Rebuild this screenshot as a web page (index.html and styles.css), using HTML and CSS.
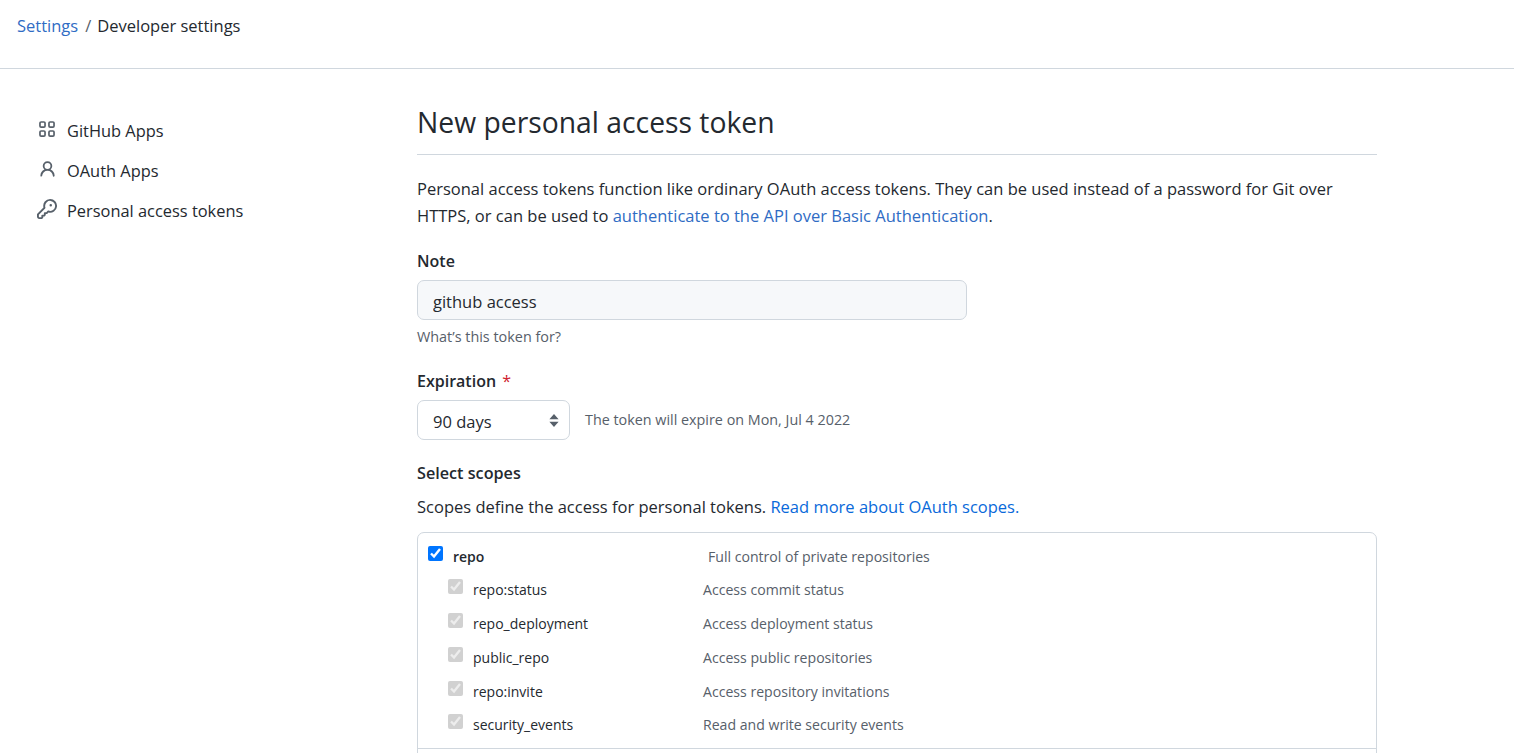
FILE: index.html
```html
<!DOCTYPE html>
<html lang="en">
<head>
<meta charset="utf-8">
<title>New personal access token</title>
<link rel="stylesheet" href="styles.css">
</head>
<body>
<header class="topbar">
  <nav class="crumbs"><a href="#" class="link">Settings</a><span class="sep">/</span><span>Developer settings</span></nav>
</header>
<div class="layout">
  <aside class="side">
    <a class="side-item" href="#">
      <svg class="icon" viewBox="0 0 16 16" width="16" height="16"><path fill-rule="evenodd" d="M1 2.75A1.75 1.75 0 0 1 2.75 1h2.5A1.75 1.75 0 0 1 7 2.75v2.5A1.75 1.75 0 0 1 5.25 7h-2.5A1.75 1.75 0 0 1 1 5.25v-2.5zm1.75-.25a.25.25 0 0 0-.25.25v2.5c0 .138.112.25.25.25h2.5a.25.25 0 0 0 .25-.25v-2.5a.25.25 0 0 0-.25-.25h-2.5zM9 2.75A1.75 1.75 0 0 1 10.75 1h2.5A1.75 1.75 0 0 1 15 2.75v2.5A1.75 1.75 0 0 1 13.25 7h-2.5A1.75 1.75 0 0 1 9 5.25v-2.5zm1.75-.25a.25.25 0 0 0-.25.25v2.5c0 .138.112.25.25.25h2.5a.25.25 0 0 0 .25-.25v-2.5a.25.25 0 0 0-.25-.25h-2.5zM1 10.75A1.75 1.75 0 0 1 2.75 9h2.5A1.75 1.75 0 0 1 7 10.75v2.5A1.75 1.75 0 0 1 5.25 15h-2.5A1.75 1.75 0 0 1 1 13.25v-2.5zm1.75-.25a.25.25 0 0 0-.25.25v2.5c0 .138.112.25.25.25h2.5a.25.25 0 0 0 .25-.25v-2.5a.25.25 0 0 0-.25-.25h-2.5zM9 10.75A1.75 1.75 0 0 1 10.75 9h2.5A1.75 1.75 0 0 1 15 10.75v2.5A1.75 1.75 0 0 1 13.25 15h-2.5A1.75 1.75 0 0 1 9 13.25v-2.5zm1.75-.25a.25.25 0 0 0-.25.25v2.5c0 .138.112.25.25.25h2.5a.25.25 0 0 0 .25-.25v-2.5a.25.25 0 0 0-.25-.25h-2.5z"/></svg>
      <span>GitHub Apps</span>
    </a>
    <a class="side-item" href="#">
      <svg class="icon icon-person" viewBox="0 0 16 16" width="16" height="16"><path fill-rule="evenodd" d="M10.5 5a2.5 2.5 0 1 1-5 0 2.5 2.5 0 0 1 5 0zm.061 3.073a4 4 0 1 0-5.123 0 6.004 6.004 0 0 0-3.431 5.142.75.75 0 0 0 1.498.07 4.5 4.5 0 0 1 8.99 0 .75.75 0 1 0 1.498-.07 6.005 6.005 0 0 0-3.432-5.142z"/></svg>
      <span>OAuth Apps</span>
    </a>
    <a class="side-item" href="#">
      <svg class="icon icon-key" viewBox="0 0 16 16" width="20" height="20"><path fill-rule="evenodd" d="M6.5 5.5a4 4 0 1 1 2.731 3.795.75.75 0 0 0-.768.18L7.44 10.5H6.25a.75.75 0 0 0-.75.75v1.19l-.06.06H4.25a.75.75 0 0 0-.75.75v1.19l-.06.06H1.75a.25.25 0 0 1-.25-.25v-1.69l5.024-5.023a.75.75 0 0 0 .181-.768A3.995 3.995 0 0 1 6.5 5.5zm4-5.5a5.5 5.5 0 0 0-5.348 6.788L.22 11.72a.75.75 0 0 0-.22.53v2C0 15.216.784 16 1.75 16h2a.75.75 0 0 0 .53-.22l.5-.5a.75.75 0 0 0 .22-.53V14h.75a.75.75 0 0 0 .53-.22l.5-.5a.75.75 0 0 0 .22-.53V12h.75a.75.75 0 0 0 .53-.22l.932-.932A5.5 5.5 0 1 0 10.5 0zm.5 6a1 1 0 1 0 0-2 1 1 0 0 0 0 2z"/></svg>
      <span>Personal access tokens</span>
    </a>
  </aside>
  <main class="main">
    <h1 class="title">New personal access token</h1>
    <p class="intro">Personal access tokens function like ordinary OAuth access tokens. They can be used instead of a password for Git over HTTPS, or can be used to <a href="#" class="link">authenticate to the API over Basic Authentication</a>.</p>
    <label class="label" for="note">Note</label>
    <input class="note-input" id="note" type="text" value="github access">
    <p class="hint">What’s this token for?</p>
    <div class="label exp-label">Expiration <span class="req">*</span></div>
    <div class="exp-row">
      <div class="select-wrap">
        <select class="select"><option>90 days</option></select>
        <svg class="select-arrows" viewBox="0 0 10 13" width="10" height="13"><path d="M5 0 9.6 5.2H.4zM5 13 .4 7.8h9.2z"/></svg>
      </div>
      <span class="exp-note">The token will expire on Mon, Jul 4 2022</span>
    </div>
    <div class="label scopes-label">Select scopes</div>
    <p class="scopes-text">Scopes define the access for personal tokens. <a href="#" class="link-bright">Read more about OAuth scopes.</a></p>
    <div class="scopes">
      <div class="scope-group">
        <div class="scope-row parent"><input type="checkbox" checked><span class="scope-name">repo</span><span class="scope-desc">Full control of private repositories</span></div>
        <div class="scope-row"><input type="checkbox" checked disabled><span class="scope-name">repo:status</span><span class="scope-desc">Access commit status</span></div>
        <div class="scope-row"><input type="checkbox" checked disabled><span class="scope-name">repo_deployment</span><span class="scope-desc">Access deployment status</span></div>
        <div class="scope-row"><input type="checkbox" checked disabled><span class="scope-name">public_repo</span><span class="scope-desc">Access public repositories</span></div>
        <div class="scope-row"><input type="checkbox" checked disabled><span class="scope-name">repo:invite</span><span class="scope-desc">Access repository invitations</span></div>
        <div class="scope-row last"><input type="checkbox" checked disabled><span class="scope-name">security_events</span><span class="scope-desc">Read and write security events</span></div>
      </div>
      <div class="scope-group next"></div>
    </div>
  </main>
</div>
</body>
</html>
```
FILE: styles.css
```css
* { box-sizing: border-box; }
html, body { margin: 0; height: 753px; overflow: hidden; }
body {
  background: #fff;
  color: #24292f;
  font-family: "Open Sans", "Noto Sans", sans-serif;
  font-size: 16px;
  line-height: 24px;
}
a { text-decoration: none; }
.link { color: #2f6cc4; }
.link-bright { color: #0969da; }
.topbar {
  height: 69px;
  border-bottom: 1px solid #d0d7de;
  padding: 14px 17px 0;
}
.crumbs { display: flex; font-size: 16.5px; }
.sep { margin: 0 6px 0 7px; color: #57606a; }
.layout { display: flex; }
.side { width: 417px; padding: 42px 0 0 38px; flex: none; font-size: 16.4px; }
.side-item {
  display: flex;
  align-items: center;
  height: 40px;
  color: #24292f;
}
.icon { fill: #57606a; flex: none; width: 18px; height: 18px; margin: 0 11px 4px 0; }
.icon-person { width: 19px; height: 19px; margin-right: 10px; }
.icon-key { width: 20px; height: 20px; margin-left: -1px; margin-right: 10px; }
.main { width: 960px; padding-top: 35px; }
.title {
  font-size: 28.3px;
  font-weight: 400;
  line-height: 36px;
  margin: 0;
  padding-bottom: 14px;
  border-bottom: 1px solid #d0d7de;
}
.intro { margin: 20px 0 0; line-height: 27px; font-size: 16.5px; }
.label { display: block; font-weight: 600; margin-top: 20px; }
.note-input {
  display: block;
  width: 550px;
  height: 40px;
  margin-top: 7px;
  padding: 3px 15px 0;
  border: 1px solid #d0d7de;
  border-radius: 7px;
  background: #f6f8fa;
  color: #24292f;
  font: inherit;
  font-size: 16.5px;
}
.hint { margin: 5px 0 0; font-size: 14.4px; color: #57606a; line-height: 24px; }
.exp-label { margin-top: 20px; }
.req { color: #cf222e; font-weight: 400; margin-left: 2px; }
.exp-row { display: flex; align-items: center; margin-top: 7px; }
.select-wrap { position: relative; width: 153px; height: 40px; }
.select {
  appearance: none;
  width: 100%;
  height: 100%;
  padding: 3px 15px 0;
  border: 1px solid #d0d7de;
  border-radius: 7px;
  background: #fff;
  color: #24292f;
  font: inherit;
  font-size: 16.5px;
}
.select-arrows { position: absolute; right: 11px; top: 14px; fill: #57606a; width: 10px; height: 13px; }
.exp-note { margin-left: 15px; font-size: 14.35px; color: #57606a; }
.scopes-label { margin-top: 21px; font-size: 16.2px; }
.scopes-text { margin: 10px 0 0; font-size: 16.5px; }
.scopes {
  margin-top: 13px;
  border: 1px solid #d0d7de;
  border-radius: 7px;
  height: 400px;
}
.scope-group { padding: 7px 0 0; height: 216px; border-bottom: 1px solid #d0d7de; }
.scope-row {
  display: flex;
  align-items: center;
  height: 34px;
  padding-left: 30px;
  font-size: 14.1px;
  color: #24292f;
}
.scope-row input { margin: 0 10px 7px 0; width: 15px; height: 15px; flex: none; }
.scope-name { width: 230px; flex: none; font-size: 14px; }
.scope-desc { color: #57606a; }
.parent { padding-left: 10px; height: 33px; }
.parent input { margin-bottom: 7px; }
.parent .scope-name { font-weight: 600; width: 255px; }
.last { height: 32px; }
```
